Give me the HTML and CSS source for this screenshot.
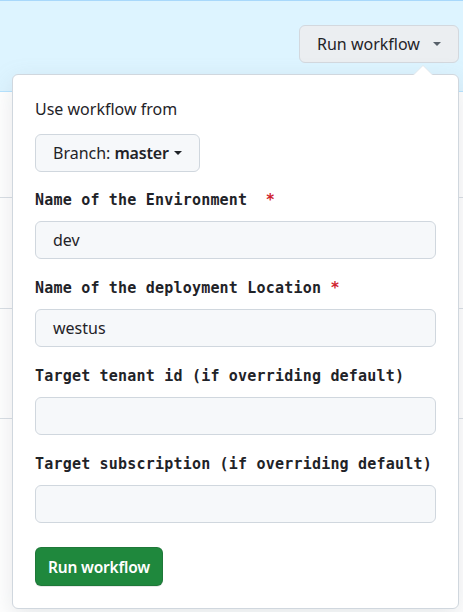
FILE: index.html
```html
<!DOCTYPE html>
<html lang="en">
<head>
<meta charset="utf-8">
<title>Run workflow</title>
<link rel="stylesheet" href="styles.css">
</head>
<body>
<div class="page">
  <div class="banner">
    <button class="btn-run-menu" type="button"><span class="btn-run-label">Run workflow</span><span class="caret"></span></button>
  </div>
  <div class="rows">
    <div class="row row-1"></div>
    <div class="row row-2"></div>
    <div class="row row-3"></div>
    <div class="row row-4"></div>
  </div>

  <form class="popover">
    <div class="use-from">Use workflow from</div>
    <button class="btn-branch" type="button">Branch: <strong>master</strong><span class="caret caret-sm"></span></button>

    <div class="field field-first">
      <label class="field-label">Name of the Environment  <span class="req">*</span></label>
      <div class="input">dev</div>
    </div>
    <div class="field">
      <label class="field-label">Name of the deployment Location <span class="req">*</span></label>
      <div class="input">westus</div>
    </div>
    <div class="field">
      <label class="field-label">Target tenant id (if overriding default)</label>
      <div class="input"></div>
    </div>
    <div class="field">
      <label class="field-label">Target subscription (if overriding default)</label>
      <div class="input"></div>
    </div>

    <button class="btn-primary" type="button">Run workflow</button>
  </form>
</div>
</body>
</html>
```

FILE: styles.css
```css
* { box-sizing: border-box; }

html, body {
  margin: 0;
  padding: 0;
  background: #ffffff;
}

body {
  font-family: "Noto Sans", "Open Sans", sans-serif;
  color: #1f2328;
  font-size: 16px;
}

.page {
  position: relative;
  width: 463px;
  height: 612px;
  overflow: hidden;
}

.banner {
  height: 92px;
  background: #ddf4ff;
  border-top: 1px solid #a8d8fb;
  border-bottom: 1px solid #b6e3ff;
  display: flex;
  justify-content: flex-end;
  align-items: flex-start;
  padding: 24px 4px 0 0;
}

.btn-run-menu {
  height: 38px;
  width: 160px;
  display: flex;
  align-items: center;
  padding: 0 17px 0 17px;
  background: #ebeef1;
  border: 1px solid #d3d8de;
  border-radius: 6px;
  font-family: "Noto Sans", "Open Sans", sans-serif;
  font-size: 16px;
  color: #1f2328;
}

.btn-run-label {
  flex: 1;
  text-align: left;
  white-space: nowrap;
}

.caret {
  display: inline-block;
  width: 0;
  height: 0;
  border-left: 4px solid transparent;
  border-right: 4px solid transparent;
  border-top: 4px solid #57606a;
}

.caret-sm {
  margin-left: 5px;
  vertical-align: 3px;
  border-top-color: #1f2328;
}

.rows {
  display: flex;
  flex-direction: column;
}

.row {
  border-bottom: 1px solid #d8dee4;
}
.row-1 { height: 106px; }
.row-2 { height: 111px; }
.row-3 { height: 110px; }
.row-4 { height: 200px; border-bottom: 0; }

.popover {
  position: absolute;
  top: 74px;
  left: 12px;
  width: 447px;
  height: 535px;
  background: #ffffff;
  border: 1px solid #d0d7de;
  border-radius: 6px;
  box-shadow: 0 8px 24px rgba(140, 149, 159, 0.22);
  padding: 22px 22px 22px 22px;
  display: flex;
  flex-direction: column;
  align-items: flex-start;
}

.popover::before,
.popover::after {
  content: "";
  position: absolute;
  width: 0;
  height: 0;
}
.popover::before {
  top: -10px;
  left: 400px;
  border-left: 10px solid transparent;
  border-right: 10px solid transparent;
  border-bottom: 10px solid #e4e8ec;
}
.popover::after {
  top: -9px;
  left: 401px;
  border-left: 9px solid transparent;
  border-right: 9px solid transparent;
  border-bottom: 9px solid #ffffff;
}

.use-from {
  font-size: 16px;
  line-height: 24px;
  margin-bottom: 13px;
}

.btn-branch {
  height: 38px;
  padding: 0 17px;
  background: #f6f8fa;
  border: 1px solid #d0d7de;
  border-radius: 6px;
  font-family: inherit;
  font-size: 16px;
  color: #1f2328;
  display: flex;
  align-items: center;
}
.btn-branch strong {
  font-weight: 600;
  margin-left: 4px;
  letter-spacing: -0.2px;
}

.field {
  width: 100%;
  margin-top: 19px;
  display: flex;
  flex-direction: column;
}
.field-first { margin-top: 18px; }

.field-label {
  font-family: "DejaVu Sans Mono", monospace;
  font-weight: bold;
  font-size: 15px;
  letter-spacing: 0.2px;
  line-height: 20px;
  white-space: pre;
  color: #1f2328;
  margin-bottom: 11px;
}

.req {
  color: #cf222e;
}

.input {
  height: 38px;
  width: 100%;
  background: #f6f8fa;
  border: 1px solid #d0d7de;
  border-radius: 6px;
  padding: 0 17px;
  display: flex;
  align-items: center;
  font-size: 16px;
  color: #1f2328;
}

.btn-primary {
  margin-top: 24px;
  height: 39px;
  padding: 0 12px 0 12px;
  background: #1f883d;
  border: 1px solid rgba(31, 35, 40, 0.15);
  border-radius: 6px;
  box-shadow: 0 1px 0 rgba(31, 35, 40, 0.1);
  color: #ffffff;
  font-family: inherit;
  font-weight: 600;
  font-size: 15.5px;
  letter-spacing: -0.2px;
}
```
